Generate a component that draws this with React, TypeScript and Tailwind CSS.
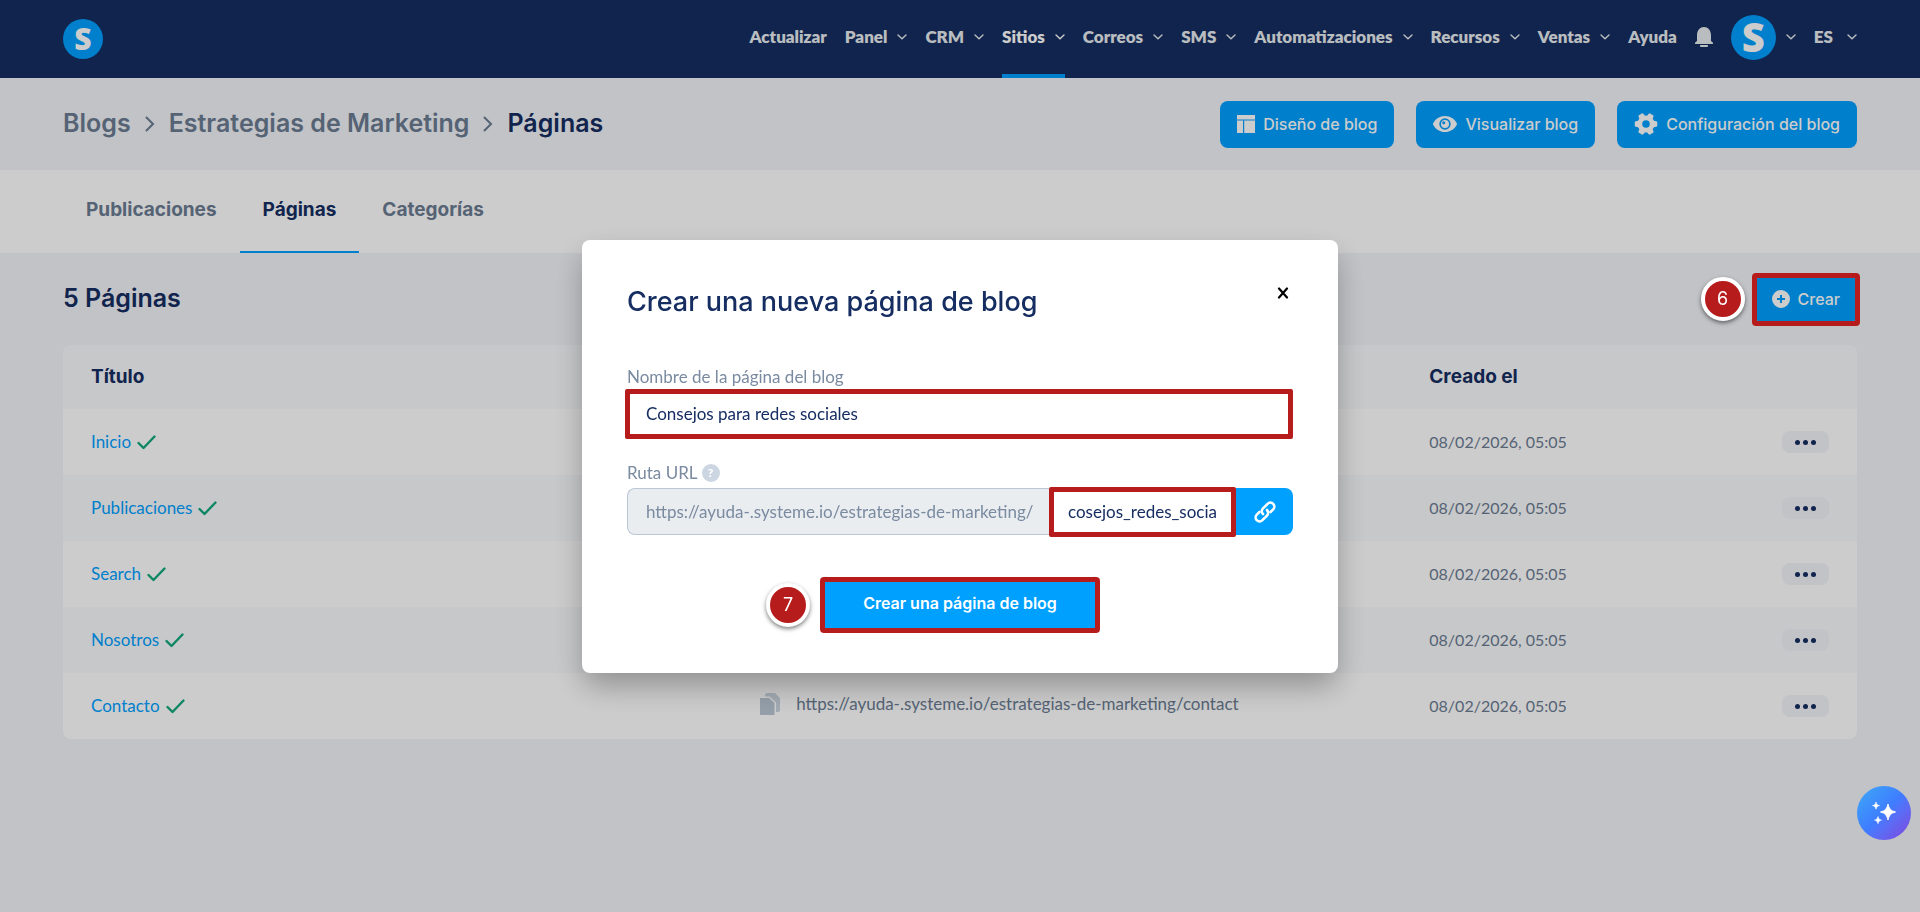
import React from 'react';

interface NavItem {
  label: string;
  menu?: boolean;
  active?: boolean;
}

interface BlogPage {
  title: string;
  path: string;
  createdAt: string;
}

const navItems: NavItem[] = [
  { label: 'Actualizar' },
  { label: 'Panel', menu: true },
  { label: 'CRM', menu: true },
  { label: 'Sitios', menu: true, active: true },
  { label: 'Correos', menu: true },
  { label: 'SMS', menu: true },
  { label: 'Automatizaciones', menu: true },
  { label: 'Recursos', menu: true },
  { label: 'Ventas', menu: true },
  { label: 'Ayuda' },
];

const tabs = ['Publicaciones', 'Páginas', 'Categorías'];

const BASE_URL = 'https://ayuda-.systeme.io/estrategias-de-marketing/';

const pages: BlogPage[] = [
  { title: 'Inicio', path: '', createdAt: '08/02/2026, 05:05' },
  { title: 'Publicaciones', path: 'posts', createdAt: '08/02/2026, 05:05' },
  { title: 'Search', path: 'search', createdAt: '08/02/2026, 05:05' },
  { title: 'Nosotros', path: 'about', createdAt: '08/02/2026, 05:05' },
  { title: 'Contacto', path: 'contact', createdAt: '08/02/2026, 05:05' },
];

const Caret = () => (
  <svg width="10" height="6" viewBox="0 0 10 6" fill="none" stroke="currentColor" strokeWidth="1.4" strokeLinecap="round" aria-hidden="true">
    <path d="M1 1 5 4.800 9 1" />
  </svg>
);

const Separator = () => (
  <svg width="10" height="16" viewBox="0 0 10 16" fill="none" stroke="currentColor" strokeWidth="2" strokeLinecap="round" aria-hidden="true">
    <path d="M1.500 1.500 8 8l-6.500 6.500" />
  </svg>
);

const BellIcon = () => (
  <svg width="18" height="20" viewBox="0 0 18 20" fill="currentColor" aria-hidden="true">
    <path d="M9 0c4 0 6.800 3 7 8v6l1.800 1.600c.4.400.3 1.400-.6 1.400H.8c-.9 0-1-1-.6-1.400L2 14V8c.2-5 3-8 7-8z" />
    <path d="M5 18h8v1a1 1 0 0 1-1 1H6a1 1 0 0 1-1-1z" />
  </svg>
);

const LayoutIcon = () => (
  <svg width="18" height="18" viewBox="0 0 18 18" fill="currentColor" aria-hidden="true">
    <path d="M0 0h18v4H0z" />
    <path d="M0 4h18v1H0z" opacity=".5" />
    <path d="M0 5.500h6V18H0zM7.200 5.500H18V18H7.200z" />
  </svg>
);

const EyeIcon = () => (
  <svg width="24" height="16" viewBox="0 0 24 16" fill="currentColor" aria-hidden="true">
    <path
      fillRule="evenodd"
      d="M12 0c5.300 0 9.600 3 11.800 7.300.2.500.2.900 0 1.400C21.600 13 17.300 16 12 16S2.400 13 .2 8.700a1.600 1.600 0 0 1 0-1.400C2.400 3 6.700 0 12 0zm0 2.300a5.700 5.700 0 1 0 0 11.400 5.700 5.700 0 0 0 0-11.400z"
    />
    <path fillRule="evenodd" d="M12 4a4 4 0 1 1 0 8 4 4 0 0 1 0-8zm-1.300 1.300a1.500 1.500 0 1 0 0 3 1.500 1.500 0 0 0 0-3z" />
  </svg>
);

const GearIcon = () => (
  <svg width="24" height="24" viewBox="0 0 24 24" fill="currentColor" aria-hidden="true">
    <circle cx="12" cy="12" r="6.200" fill="none" stroke="currentColor" strokeWidth="4.800" />
    {[30, 90, 150, 210, 270, 330].map((angle) => (
      <path key={angle} d="M8.600 5.500 9.200 1.800Q9.400.900 10.300.800h3.400q.9.100 1.100 1l.6 3.700z" transform={`rotate(${angle} 12 12)`} />
    ))}
  </svg>
);

const PlusCircleIcon = () => (
  <svg width="18" height="18" viewBox="0 0 18 18" fill="currentColor" aria-hidden="true">
    <path fillRule="evenodd" d="M9 0a9 9 0 1 1 0 18A9 9 0 0 1 9 0zM8 5v3H5v2h3v3h2v-3h3V8h-3V5z" />
  </svg>
);

const CheckIcon = () => (
  <svg width="19" height="15" viewBox="0 0 19 15" fill="none" stroke="#11a97c" strokeWidth="2.400" aria-hidden="true">
    <path d="M1.500 8 6.500 13 17.500 1.500" strokeLinecap="round" strokeLinejoin="round" />
  </svg>
);

const CopyIcon = () => (
  <svg width="20" height="22" viewBox="0 0 20 22" fill="#bac7d5" aria-hidden="true">
    <path d="M0 5h9l5.500 5v12H0z" />
    <path d="M5 3.500V2a2 2 0 0 1 2-2h8l5 5v12a2 2 0 0 1-2 2h-2V9.500L9.500 3.500z" opacity=".75" />
  </svg>
);

const LinkIcon = () => (
  <svg width="22" height="22" viewBox="0 0 22 22" fill="none" stroke="currentColor" strokeWidth="2.600" strokeLinecap="round" aria-hidden="true">
    <path d="M9 13a4 4 0 0 1 0-5.600l4.600-4.600a3.900 3.900 0 0 1 5.600 5.600L16.500 11" />
    <path d="M13 9a4 4 0 0 1 0 5.600l-4.600 4.600a3.900 3.900 0 0 1-5.600-5.600L5.500 11" />
  </svg>
);

const SparklesIcon = () => (
  <svg width="26" height="22" viewBox="0 0 26 22" fill="#fff" aria-hidden="true">
    <path d="M17 2c.9 4.500 3 6.900 7.500 8-4.500 1.100-6.600 3.500-7.500 8-.9-4.500-3-6.900-7.500-8 4.500-1.100 6.600-3.500 7.500-8z" stroke="#fff" />
    <path d="M5 0c.5 2.200 1.300 3.100 3.500 3.600C6.300 4.100 5.500 5 5 7.200 4.500 5 3.700 4.100 1.500 3.600 3.700 3.100 4.500 2.200 5 0zM7 14.500c.5 2.200 1.300 3.100 3.500 3.600-2.200.5-3 1.400-3.500 3.600-.5-2.200-1.300-3.100-3.500-3.600 2.200-.5 3-1.400 3.500-3.600z" stroke="#fff" strokeWidth=".6" />
  </svg>
);

const StepBadge: React.FC<{ step: number }> = ({ step }) => (
  <span className="absolute top-1/2 right-full z-50 mr-[10px] flex size-11 -translate-y-1/2 items-center justify-center rounded-full border-4 border-white bg-[#b71c1c] text-lg text-white shadow-[0_2px_4px_rgba(0,0,0,0.5)]">
    {step}
  </span>
);

const Header = () => (
  <header className="flex h-[78px] items-center justify-between bg-[#152d61] px-[63px]">
    <a href="#inicio" aria-label="Inicio" className="flex size-10 items-center justify-center rounded-full bg-[#009fff] font-['Open_Sans',sans-serif] text-3xl font-extrabold text-white">
      S
    </a>
    <nav className="flex h-full items-center gap-[18px] font-['Lato',sans-serif] text-[17px] font-extrabold text-[#e9edf0]">
      {navItems.map((item) => (
        <a
          key={item.label}
          href="#menu"
          className={`flex h-full items-center gap-[10px] border-b-4 ${item.active ? 'border-[#009fff] text-white' : 'border-transparent'}`}
        >
          {item.label}
          {item.menu && <Caret />}
        </a>
      ))}
      <button type="button" aria-label="Notificaciones" className="pb-1">
        <BellIcon />
      </button>
      <button type="button" className="flex items-center gap-[10px] pb-1" aria-label="Cuenta">
        <span className="flex size-[45px] items-center justify-center rounded-full bg-[#009fff] font-['Open_Sans',sans-serif] text-[40px] leading-none font-extrabold text-white">
          S
        </span>
        <Caret />
      </button>
      <button type="button" className="flex items-center gap-[14px] pb-1">
        ES
        <Caret />
      </button>
    </nav>
  </header>
);

const actionClass = 'flex h-[47px] items-center gap-2 rounded-lg bg-[#00a0ff] px-[17px] text-base font-medium text-white';

const PageBar = () => (
  <div className="flex h-[92px] items-center justify-between px-[63px]">
    <div className="flex items-center gap-[14px] text-[25px] font-semibold text-[#6b7c93]">
      <a href="#blogs">Blogs</a>
      <Separator />
      <a href="#blog">Estrategias de Marketing</a>
      <Separator />
      <h1 className="text-[#152d61]">Páginas</h1>
    </div>
    <div className="flex gap-[22px]">
      <button type="button" className={actionClass}>
        <LayoutIcon />
        Diseño de blog
      </button>
      <button type="button" className={actionClass}>
        <EyeIcon />
        Visualizar blog
      </button>
      <button type="button" className={actionClass}>
        <GearIcon />
        Configuración del blog
      </button>
    </div>
  </div>
);

const PagesTable = () => (
  <div className="overflow-hidden rounded-lg">
    <table className="w-full table-fixed text-left">
      <thead>
        <tr className="h-16 bg-[#f9fafc] text-[19px] text-[#152d61]">
          <th className="w-[37.3%] px-7 font-bold">Título</th>
          <th className="w-[37.3%] px-7 font-bold">URL</th>
          <th className="px-7 font-bold">Creado el</th>
          <th className="w-[120px]"></th>
        </tr>
      </thead>
      <tbody className="font-['Lato',sans-serif] text-[17px] text-[#6b7c93]">
        {pages.map((page) => (
          <tr key={page.title} className="h-[66px] odd:bg-white even:bg-[#f9fafc]">
            <td className="px-7">
              <div className="flex items-center gap-[6px]">
                <a href="#pagina" className="text-[#009fff]">{page.title}</a>
                <CheckIcon />
              </div>
            </td>
            <td className="px-7">
              <div className="flex items-center gap-4 pb-1">
                <CopyIcon />
                {BASE_URL}{page.path}
              </div>
            </td>
            <td className="px-7 text-base">{page.createdAt}</td>
            <td className="px-7">
              <button type="button" aria-label="Acciones" className="ml-auto flex h-[22px] w-[47px] items-center justify-center gap-[3px] rounded-lg bg-[#f2f4f9]">
                <span className="size-[5px] rounded-full bg-[#152d61]" />
                <span className="size-[5px] rounded-full bg-[#152d61]" />
                <span className="size-[5px] rounded-full bg-[#152d61]" />
              </button>
            </td>
          </tr>
        ))}
      </tbody>
    </table>
  </div>
);

const CreatePageModal = () => {
  const [name, setName] = React.useState('Consejos para redes sociales');
  const [slug, setSlug] = React.useState('cosejos_redes_sociales');

  return (
    <div className="fixed inset-0 z-40 flex items-center justify-center bg-black/20">
      <div role="dialog" aria-modal="true" aria-labelledby="modal-title" className="w-full max-w-[756px] rounded-lg bg-white px-[45px] pt-[45px] pb-10 shadow-[0_14px_30px_-2px_rgba(0,0,0,0.3)]">
        <div className="flex items-start justify-between">
          <h2 id="modal-title" className="text-[27px] leading-[34px] font-medium text-[#152d61]">
            Crear una nueva página de blog
          </h2>
          <button type="button" aria-label="Cerrar" className="px-1 py-[2px] text-black">
            <svg width="12" height="12" viewBox="0 0 12 12" fill="none" stroke="currentColor" strokeWidth="2.200" strokeLinecap="round">
              <path d="M2 1.500 10 10.500M10 1.500 2 10.500" />
            </svg>
          </button>
        </div>

        <div className="font-['Lato',sans-serif] text-[17px]">
          <label htmlFor="page-name" className="mt-[46px] flex h-6 items-center text-[#7a8aa0]">
            Nombre de la página del blog
          </label>
          <input
            id="page-name"
            value={name}
            onChange={(e) => setName(e.target.value)}
            className="-ml-[2px] block h-[50px] w-[calc(100%+2px)] rounded-xs border-[5px] border-[#b71c1c] px-4 text-[#152d61] outline-none"
          />

          <div className="mt-[22px] flex h-6 items-center gap-1 text-[#7a8aa0]">
            <label htmlFor="page-slug">Ruta URL</label>
            <span className="flex size-[18px] items-center justify-center rounded-full bg-[#cbd6e2] text-xs font-black text-white">?</span>
          </div>
          <div className="mt-[2px] flex h-[50px] items-center">
            <span className="flex h-[47px] min-w-0 flex-1 items-center rounded-l-lg border border-r-0 border-[#bac7d5] bg-[#e9edf0] pl-[18px] whitespace-nowrap text-[#7a8aa0]">
              {BASE_URL}
            </span>
            <input
              id="page-slug"
              value={slug}
              onChange={(e) => setSlug(e.target.value)}
              className="h-[50px] w-[187px] rounded-xs border-[5px] border-[#b71c1c] px-[14px] text-[#152d61] outline-none"
            />
            <button type="button" aria-label="Copiar enlace" className="flex h-[47px] w-[57px] items-center justify-center rounded-r-lg bg-[#00a0ff] text-white">
              <LinkIcon />
            </button>
          </div>
        </div>

        <div className="mt-10 flex justify-center">
          <div className="relative">
            <StepBadge step={7} />
            <button type="button" className="h-14 rounded-sm border-[5px] border-[#b71c1c] bg-[#00a0ff] px-[38px] pb-1 text-base font-semibold text-white">
              Crear una página de blog
            </button>
          </div>
        </div>
      </div>
    </div>
  );
};

export default function App() {
  return (
    <div className="min-h-screen bg-[#f2f4f9] font-['Inter',sans-serif]">
      <Header />
      <PageBar />
      <div className="flex h-[83px] bg-white px-[63px]">
        {tabs.map((tab) => (
          <a
            key={tab}
            href="#tab"
            className={`flex items-center border-b-2 px-[23px] text-[19px] font-bold ${tab === 'Páginas' ? 'border-[#009fff] text-[#152d61]' : 'border-transparent text-[#6b7c93]'}`}
          >
            {tab}
          </a>
        ))}
      </div>

      <main className="px-[63px]">
        <div className="flex h-[92px] items-center justify-between">
          <h2 className="text-[25px] font-semibold text-[#152d61]">5 Páginas</h2>
          <div className="relative">
            <StepBadge step={6} />
            <button type="button" className={actionClass}>
              <PlusCircleIcon />
              Crear
            </button>
            <span className="pointer-events-none absolute -inset-[3px] z-50 rounded-sm border-[5px] border-[#b71c1c]" />
          </div>
        </div>
        <PagesTable />
      </main>

      <CreatePageModal />

      <button type="button" aria-label="Asistente" className="fixed right-[9px] bottom-[72px] z-50 flex size-[54px] items-center justify-center rounded-full bg-linear-to-br from-[#3fa9f5] via-[#3f7cff] to-[#7b42dd]">
        <SparklesIcon />
      </button>
    </div>
  );
}
